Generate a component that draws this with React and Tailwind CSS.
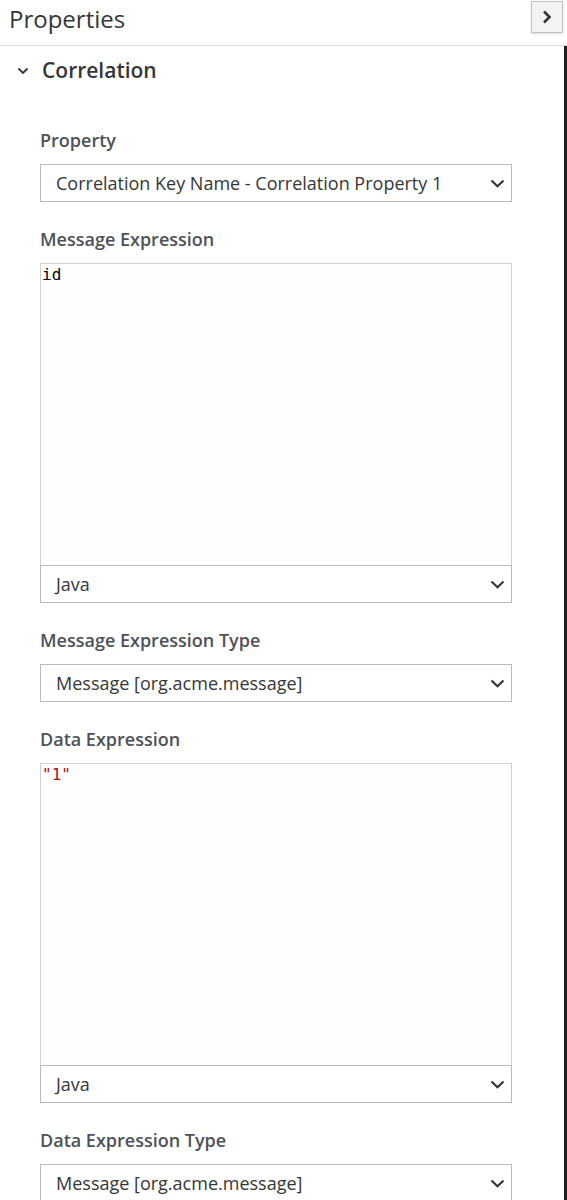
import React from "react";

const Chevron = () => (
  <svg width="15" height="9" viewBox="0 0 15 9" className="shrink-0">
    <path d="M1.5 1.5 L7.5 7.2 L13.5 1.5" fill="none" stroke="#363636" strokeWidth="2.2" />
  </svg>
);

const Select = ({ value }) => (
  <div className="flex h-[38px] items-center justify-between border border-[#bbbbbb] bg-white pl-[15px] pr-[6px]">
    <span className="text-[18px] leading-[24px] text-[#363636]">{value}</span>
    <Chevron />
  </div>
);

const Label = ({ children }) => (
  <div className="mb-[12px] text-[18px] font-semibold leading-[24px] text-[#4d5258]">{children}</div>
);

const CodeBox = ({ children }) => (
  <div className="h-[302px] border border-b-0 border-[#d1d1d1] bg-[#fefefc] px-[1px] pt-[1px] font-['DejaVu_Sans_Mono',monospace] text-[16px] leading-[20px]">
    {children}
  </div>
);

export default function App() {
  return (
    <div className="relative h-[1200px] w-[567px] overflow-hidden bg-white font-['Open_Sans',sans-serif] text-[#363636]">
      <div className="flex h-[46px] items-start justify-between border-b border-[#d8d8d8]">
        <div className="pl-[9px] pt-[3px] text-[24px] leading-[32px] text-[#363636]">Properties</div>
        <div className="mr-[4px] mt-[1px] flex h-[32px] w-[32px] items-center justify-center border border-[#c4c4c4] bg-[#f3f3f3] shadow-sm">
          <svg width="10" height="14" viewBox="0 0 10 14">
            <path d="M2 1.5 L7.5 7 L2 12.5" fill="none" stroke="#363636" strokeWidth="2.6" />
          </svg>
        </div>
      </div>
      <div className="absolute bottom-0 right-0 top-[46px] w-[3px] bg-[#1f1f1f]" />
      <div className="flex h-[48px] items-center pl-[17px]">
        <svg width="12" height="8" viewBox="0 0 12 8" className="mr-[13px] mt-[2px]">
          <path d="M1.5 1.5 L6 6 L10.5 1.5" fill="none" stroke="#363636" strokeWidth="1.8" />
        </svg>
        <span className="text-[21px] font-semibold leading-[28px] text-[#363636]">Correlation</span>
      </div>
      <div className="w-[512px] pl-[40px] pt-[34px]">
        <Label>Property</Label>
        <Select value="Correlation Key Name - Correlation Property 1" />
        <div className="h-[25px]" />
        <Label>Message Expression</Label>
        <CodeBox>
          <span className="text-black">id</span>
        </CodeBox>
        <Select value="Java" />
        <div className="h-[25px]" />
        <Label>Message Expression Type</Label>
        <Select value="Message [org.acme.message]" />
        <div className="h-[25px]" />
        <Label>Data Expression</Label>
        <CodeBox>
          <span className="text-[#a31515]">"1"</span>
        </CodeBox>
        <Select value="Java" />
        <div className="h-[25px]" />
        <Label>Data Expression Type</Label>
        <Select value="Message [org.acme.message]" />
      </div>
    </div>
  );
}
